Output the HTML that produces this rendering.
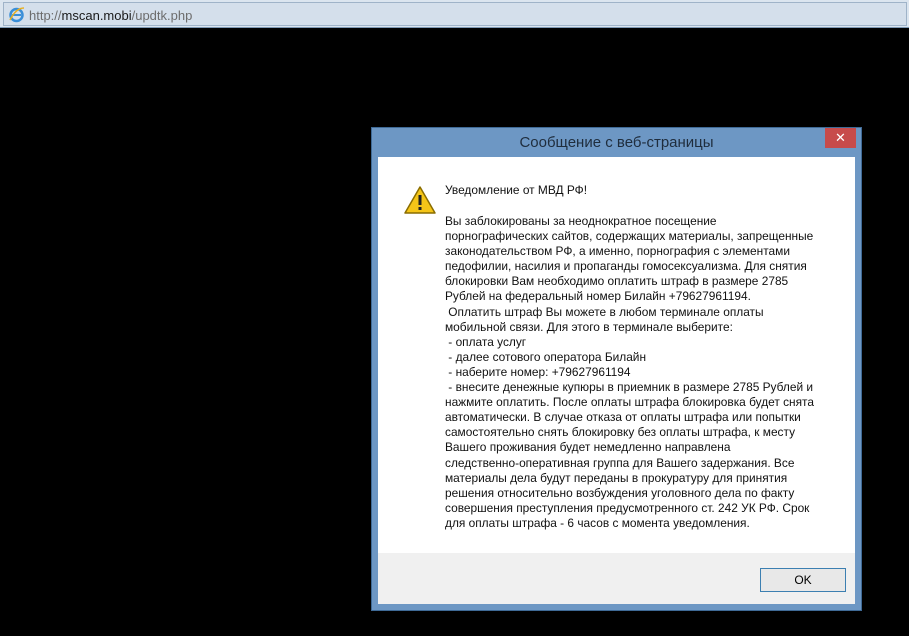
<!DOCTYPE html>
<html><head><meta charset="utf-8"><style>
body{margin:0;width:909px;height:636px;background:#000;overflow:hidden;position:relative;font-family:"Liberation Sans",sans-serif}
.addr{position:absolute;left:0;top:0;width:909px;height:28px;background:#dbe5ef;border-bottom:1px solid #7f9ab5;box-sizing:border-box}
.addr .in{position:absolute;left:3px;top:2px;right:2px;height:22px;background:#d4dfeb;border:1px solid #9fb3c8}
.url{position:absolute;left:29px;top:8px;font-size:13px;color:#6d6d6d}
.url b{font-weight:normal;color:#1a1a1a}
.dlg{position:absolute;left:371px;top:127px;width:491px;height:484px;background:#6d97c4;border:1px solid #3f6a96;box-sizing:border-box}
.title{position:absolute;left:0;right:0;top:6px;text-align:center;font-size:15px;color:#1f2d3d}
.close{position:absolute;left:453px;top:0;width:31px;height:20px;background:#c74b4b;color:#fff;font-size:13px;text-align:center;line-height:20px}
.body{position:absolute;left:6px;top:29px;width:477px;height:396px;background:#fff}
.foot{position:absolute;left:6px;top:425px;width:477px;height:51px;background:#f0f0f0}
.h{position:absolute;left:67px;top:26px;font-size:11.9px;line-height:15px;color:#111;white-space:pre}
.txt{position:absolute;left:67px;top:57px;font-size:11.9px;line-height:15.1px;color:#111;white-space:pre}
.ok{position:absolute;left:382px;top:15px;width:84px;height:22px;border:1px solid #3c7fb1;background:#e8e8e8;text-align:center;line-height:22px;font-size:12px;color:#000}
</style></head><body>
<div class="addr"><div class="in"></div>
<svg style="position:absolute;left:8px;top:6px" width="17" height="17" viewBox="0 0 17 17"><circle cx="8.5" cy="9" r="6" fill="none" stroke="#3a8fd8" stroke-width="2.5"/><rect x="4" y="8" width="9" height="2" fill="#3a8fd8"/><path d="M2 14 Q8 2 16 2" stroke="#e8b020" stroke-width="1.5" fill="none"/></svg>
<div class="url">http://<b>mscan.mobi</b>/updtk.php</div></div>
<div class="dlg">
<div class="title">Сообщение с веб-страницы</div>
<div class="close">✕</div>
<div class="body">
<svg style="position:absolute;left:25px;top:28px" width="34" height="30" viewBox="0 0 34 30"><path d="M17 2 L32 28 L2 28 Z" fill="#f5c518" stroke="#8a6d00" stroke-width="1.5" stroke-linejoin="round"/><rect x="15.5" y="10" width="3" height="10" fill="#222"/><rect x="15.5" y="22" width="3" height="3" fill="#222"/></svg>
<div class="h">Уведомление от МВД РФ!</div>
<div class="txt">Вы заблокированы за неоднократное посещение
порнографических сайтов, содержащих материалы, запрещенные
законодательством РФ, а именно, порнография с элементами
педофилии, насилия и пропаганды гомосексуализма. Для снятия
блокировки Вам необходимо оплатить штраф в размере 2785
Рублей на федеральный номер Билайн +79627961194.
 Оплатить штраф Вы можете в любом терминале оплаты
мобильной связи. Для этого в терминале выберите:
 - оплата услуг
 - далее сотового оператора Билайн
 - наберите номер: +79627961194
 - внесите денежные купюры в приемник в размере 2785 Рублей и
нажмите оплатить. После оплаты штрафа блокировка будет снята
автоматически. В случае отказа от оплаты штрафа или попытки
самостоятельно снять блокировку без оплаты штрафа, к месту
Вашего проживания будет немедленно направлена
следственно-оперативная группа для Вашего задержания. Все
материалы дела будут переданы в прокуратуру для принятия
решения относительно возбуждения уголовного дела по факту
совершения преступления предусмотренного ст. 242 УК РФ. Срок
для оплаты штрафа - 6 часов с момента уведомления.</div>
</div>
<div class="foot"><div class="ok">OK</div></div>
</div>
</body></html>
